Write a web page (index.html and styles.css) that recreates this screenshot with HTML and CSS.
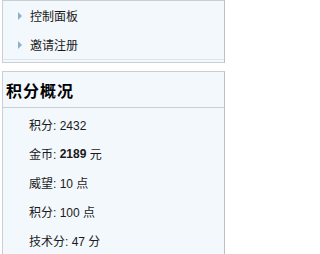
FILE: index.html
```html
<!DOCTYPE html>
<html>
<head>
<meta charset="utf-8">
<link rel="stylesheet" href="styles.css">
</head>
<body>
<div class="box nav-box">
  <ul class="nav">
    <li class="nav-item"><span class="arrow"></span><span>控制面板</span></li>
    <li class="nav-item"><span class="arrow"></span><span>邀请注册</span></li>
  </ul>
</div>
<div class="box stats-box">
  <div class="box-title">积分概况</div>
  <ul class="stats">
    <li class="stat">积分: 2432</li>
    <li class="stat">金币: <b>2189</b> 元</li>
    <li class="stat">威望: 10 点</li>
    <li class="stat">积分: 100 点</li>
    <li class="stat">技术分: 47 分</li>
  </ul>
</div>
</body>
</html>
```

FILE: styles.css
```css
html, body {
  margin: 0;
  padding: 0;
  background: #ffffff;
}
body {
  font-family: "Liberation Sans", "Noto Sans CJK SC", sans-serif;
  font-size: 12px;
  color: #1a1a1a;
  width: 226px;
  height: 254px;
  overflow: hidden;
}
ul {
  list-style: none;
  margin: 0;
  padding: 0;
}
.box {
  margin-left: 2px;
  width: 221px;
  background: #f3f8fd;
  border: 1px solid #c9cfd5;
  border-right-color: #bcc1c6;
}
.nav-box {
  padding-bottom: 2px;
}
.nav {
  border-bottom: 1px solid #dde4ea;
}
.nav-item {
  height: 29px;
  display: flex;
  align-items: center;
  padding-left: 15px;
  gap: 8px;
}
.arrow {
  flex: none;
  width: 0;
  height: 0;
  border-top: 4px solid transparent;
  border-bottom: 4px solid transparent;
  border-left: 4px solid #8fb0cc;
}
.stats-box {
  margin-top: 8px;
}
.box-title {
  height: 35px;
  display: flex;
  align-items: center;
  padding-left: 3px;
  font-size: 16px;
  font-weight: bold;
  letter-spacing: 1px;
  color: #000000;
  border-bottom: 1px solid #c9cfd5;
}
.stats {
  padding-top: 2px;
}
.stat {
  height: 29px;
  display: flex;
  align-items: center;
  padding-left: 26px;
  white-space: pre;
}
.stat b {
  font-weight: bold;
}
```
